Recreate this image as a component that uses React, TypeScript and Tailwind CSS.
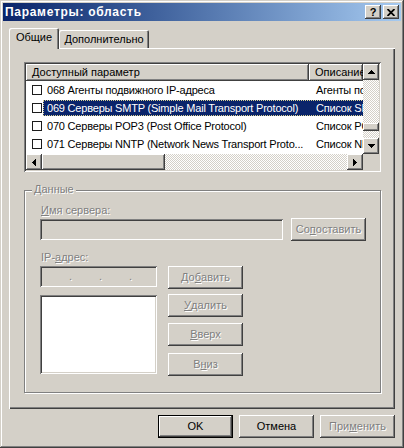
import type { ReactNode } from 'react';

const raised =
  'shadow-[inset_-1px_-1px_0_#404040,inset_1px_1px_0_#ffffff,inset_-2px_-2px_0_#808080,inset_2px_2px_0_#d4d0c8]';
const sunken =
  'shadow-[inset_1px_1px_0_#808080,inset_-1px_-1px_0_#ffffff,inset_2px_2px_0_#404040,inset_-2px_-2px_0_#d4d0c8]';
const disabledText = 'text-[#808080] [text-shadow:1px_1px_0_#ffffff]';
const dither =
  'bg-[image:repeating-conic-gradient(#d4d0c8_0%_25%,#ffffff_0%_50%)] bg-[length:2px_2px]';

function Arrow({ dir }: { dir: 'up' | 'down' | 'left' | 'right' }) {
  const pts = {
    up: '3.5,0 7,4 0,4',
    down: '0,0 7,0 3.5,4',
    left: '4,0 4,7 0,3.5',
    right: '0,0 0,7 4,3.5',
  }[dir];
  const vertical = dir === 'up' || dir === 'down';
  return (
    <svg width={vertical ? 7 : 4} height={vertical ? 4 : 7} viewBox={vertical ? '0 0 7 4' : '0 0 4 7'}>
      <polygon points={pts} fill="#000" shapeRendering="crispEdges" />
    </svg>
  );
}

function ScrollBtn({ dir }: { dir: 'up' | 'down' | 'left' | 'right' }) {
  return (
    <div className={`flex h-[16px] w-[16px] shrink-0 items-center justify-center bg-[#d4d0c8] ${raised}`}>
      <Arrow dir={dir} />
    </div>
  );
}

function Button({
  children,
  disabled,
  isDefault,
  className = '',
}: {
  children: ReactNode;
  disabled?: boolean;
  isDefault?: boolean;
  className?: string;
}) {
  const frame = isDefault
    ? 'shadow-[inset_0_0_0_1px_#000000,inset_-2px_-2px_0_#404040,inset_2px_2px_0_#ffffff,inset_-3px_-3px_0_#808080]'
    : raised;
  return (
    <div
      className={`flex h-[23px] w-[75px] shrink-0 items-center justify-center bg-[#d4d0c8] ${frame} ${
        disabled ? disabledText : 'text-black'
      } ${className}`}
    >
      {children}
    </div>
  );
}

const rows = [
  { id: '068 Агенты подвижного IP-адреса', desc: 'Агенты подвижного IP', selected: false },
  { id: '069 Серверы SMTP (Simple Mail Transport Protocol)', desc: 'Список SMTP-серверов', selected: true },
  { id: '070 Серверы POP3 (Post Office Protocol)', desc: 'Список POP3-серверов', selected: false },
  { id: '071 Серверы NNTP (Network News Transport Proto...', desc: 'Список NNTP-серверов', selected: false },
];

function ListView() {
  return (
    <div className={`flex h-[110px] w-[357px] flex-col bg-white p-[2px] ${sunken}`}>
      <div className="flex h-[90px]">
        <div className="flex w-[337px] flex-col overflow-hidden">
          <div className="flex h-[17px] shrink-0">
            <div className={`flex w-[283px] shrink-0 items-center bg-[#d4d0c8] pl-[6px] ${raised}`}>
              Доступный параметр
            </div>
            <div className={`flex flex-1 items-center overflow-hidden whitespace-nowrap bg-[#d4d0c8] pl-[6px] ${raised}`}>
              Описание
            </div>
          </div>
          {rows.map((r) => (
            <div key={r.id} className="flex h-[18px] shrink-0 items-center">
              <div className="ml-[6px] mr-[1px] h-[10px] w-[10px] shrink-0 border border-[#1c1c1c] bg-white" />
              <div
                className={`flex h-[16px] flex-1 items-center whitespace-nowrap tracking-[-0.2px] ${
                  r.selected
                    ? 'bg-[#0a246a] text-white outline-1 outline-dotted outline-offset-[-1px] outline-[#d8d090]'
                    : 'text-black'
                }`}
              >
                <div className="w-[266px] shrink-0 overflow-hidden pl-[4px]">{r.id}</div>
                <div className="flex-1 overflow-hidden pl-[7px]">{r.desc}</div>
              </div>
            </div>
          ))}
        </div>
        <div className="flex w-[16px] flex-col">
          <ScrollBtn dir="up" />
          <div className={`h-[43px] ${dither}`} />
          <div className={`h-[8px] bg-[#d4d0c8] ${raised}`} />
          <div className={`h-[7px] ${dither}`} />
          <ScrollBtn dir="down" />
        </div>
      </div>
      <div className="flex h-[16px]">
        <ScrollBtn dir="left" />
        <div className={`w-[123px] shrink-0 bg-[#d4d0c8] ${raised}`} />
        <div className={`flex-1 ${dither}`} />
        <ScrollBtn dir="right" />
        <div className="w-[16px] bg-[#d4d0c8]" />
      </div>
    </div>
  );
}

function DataGroup() {
  return (
    <div className="relative mt-[18px] flex h-[203px] w-[357px] flex-col border border-[#808080] pl-[15px] shadow-[inset_1px_1px_0_#ffffff,1px_1px_0_#ffffff]">
      <div className={`absolute left-[7px] top-[-8px] bg-[#d4d0c8] px-[2px] leading-[13px] ${disabledText}`}>
        Данные
      </div>
      <div className={`mt-[13px] h-[13px] pl-[1px] leading-[13px] ${disabledText}`}>
        <u>И</u>мя сервера:
      </div>
      <div className="mt-[1px] flex h-[23px] items-start">
        <div className={`mt-[1px] h-[21px] w-[243px] bg-[#d4d0c8] ${sunken}`} />
        <Button disabled className="ml-[8px]">
          Со<u>п</u>оставить
        </Button>
      </div>
      <div className={`mt-[10px] h-[13px] pl-[1px] leading-[13px] ${disabledText}`}>
        IP-<u>а</u>дрес:
      </div>
      <div className="mt-[2px] flex h-[23px] items-start">
        <div className={`flex h-[21px] w-[117px] items-center bg-[#d4d0c8] pl-[3px] ${sunken} ${disabledText}`}>
          <span className="w-[30px] pr-[1px] text-right">.</span>
          <span className="w-[30px] pr-[1px] text-right">.</span>
          <span className="w-[30px] pr-[1px] text-right">.</span>
        </div>
        <Button disabled className="ml-[11px]">
          До<u>б</u>авить
        </Button>
      </div>
      <div className="mt-[5px] flex items-start">
        <div className={`mt-[1px] h-[79px] w-[117px] bg-white ${sunken}`} />
        <div className="ml-[11px] flex flex-col">
          <Button disabled>
            <u>У</u>далить
          </Button>
          <Button disabled className="mt-[6px]">
            <u>В</u>верх
          </Button>
          <Button disabled className="mt-[7px]">
            В<u>н</u>из
          </Button>
        </div>
      </div>
    </div>
  );
}

export default function App() {
  return (
    <div className="flex h-[448px] w-[404px] flex-col bg-[#d4d0c8] p-[3px] font-['Liberation_Sans',Arial,sans-serif] text-[11px] leading-[13px] text-black shadow-[inset_-1px_-1px_0_#404040,inset_1px_1px_0_#d4d0c8,inset_-2px_-2px_0_#808080,inset_2px_2px_0_#ffffff]">
      {/* title bar */}
      <div className="flex h-[18px] shrink-0 items-center bg-linear-to-r from-[#0a246a] to-[#a6caf0] pl-[2px] pr-[2px]">
        <div className="flex-1 text-[12px] font-bold tracking-[0.7px] text-white">Параметры: область</div>
        <div className="flex gap-[2px]">
          <div className={`flex h-[14px] w-[16px] items-center justify-center bg-[#d4d0c8] text-[11px] font-bold leading-none ${raised}`}>
            ?
          </div>
          <div className={`flex h-[14px] w-[16px] items-center justify-center bg-[#d4d0c8] ${raised}`}>
            <svg width="8" height="7" viewBox="0 0 8 7">
              <path d="M0.5 0 L7.5 7 M7.5 0 L0.5 7" stroke="#000" strokeWidth="1.8" />
            </svg>
          </div>
        </div>
      </div>

      {/* client area */}
      <div className="flex flex-1 flex-col px-[6px] pt-[7px]">
        <div className="flex h-[20px] items-end">
          <div className="relative z-10 -mb-[1px] flex h-[21px] w-[50px] items-center justify-center rounded-t-[2px] bg-[#d4d0c8] pb-[2px] shadow-[inset_1px_1px_0_#ffffff,inset_-1px_0_0_#404040,inset_-2px_0_0_#808080]">
            Общие
          </div>
          <div className="flex h-[18px] w-[90px] items-center justify-center rounded-t-[2px] bg-[#d4d0c8] pt-[1px] shadow-[inset_1px_1px_0_#ffffff,inset_-1px_0_0_#404040,inset_-2px_0_0_#808080]">
            Дополнительно
          </div>
        </div>

        <div className="flex h-[361px] flex-col pl-[15px] pt-[14px] shadow-[inset_1px_1px_0_#ffffff,inset_-1px_-1px_0_#404040,inset_-2px_-2px_0_#808080]">
          <ListView />
          <DataGroup />
        </div>

        <div className="mt-[6px] flex justify-end gap-[6px]">
          <Button isDefault>OK</Button>
          <Button>Отмена</Button>
          <Button disabled>
            При<u>м</u>енить
          </Button>
        </div>
      </div>
    </div>
  );
}
